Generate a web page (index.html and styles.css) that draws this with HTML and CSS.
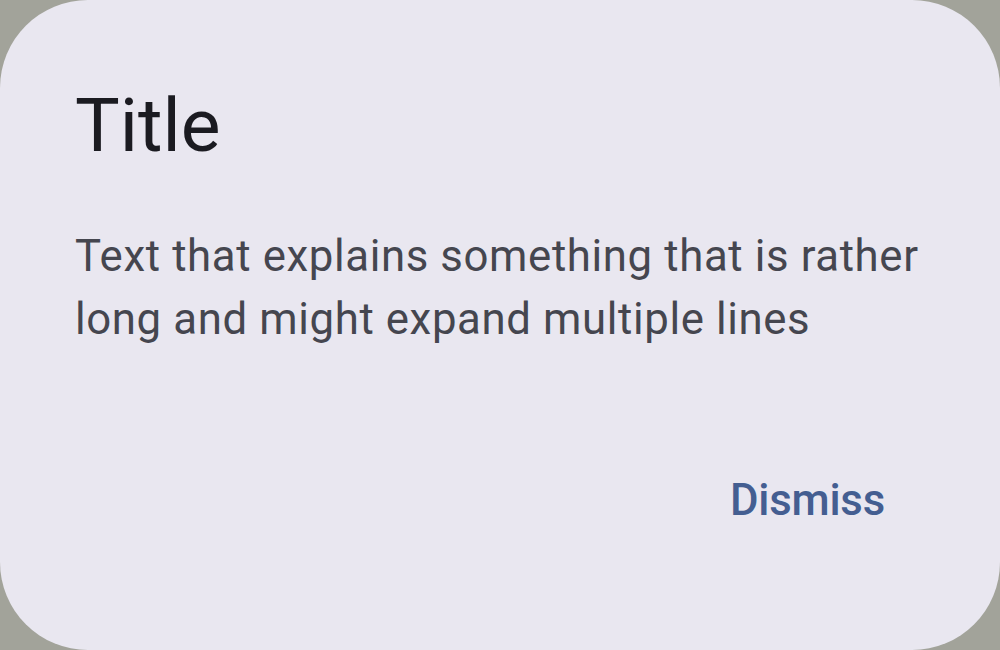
FILE: index.html
```html
<!DOCTYPE html>
<html>
<head>
<meta charset="utf-8">
<link rel="stylesheet" href="styles.css">
</head>
<body>
<div class="dialog">
  <h1 class="title">Title</h1>
  <p class="text">Text that explains something that is rather long and might expand multiple lines</p>
  <div class="actions">
    <button class="btn">Dismiss</button>
  </div>
</div>
</body>
</html>
```
FILE: styles.css
```css
html, body {
  margin: 0;
  padding: 0;
  width: 1000px;
  height: 650px;
  background: #a2a39a;
  overflow: hidden;
}
.dialog {
  box-sizing: border-box;
  width: 1000px;
  height: 650px;
  background: #e9e7f0;
  border-radius: 88px;
  padding: 75px 75px 0 75px;
  display: flex;
  flex-direction: column;
  font-family: Roboto, "Liberation Sans", sans-serif;
}
.title {
  margin: 0 0 50px 0;
  font-size: 75px;
  line-height: 100px;
  font-weight: 400;
  color: #1b1b21;
}
.text {
  margin: 0 -30px 0 0;
  font-size: 43.75px;
  line-height: 62.5px;
  letter-spacing: 0.62px;
  color: #45464f;
}
.actions {
  margin-top: 75px;
  display: flex;
  justify-content: flex-end;
}
.btn {
  height: 150px;
  padding: 0 40px;
  border: none;
  background: transparent;
  font-family: Roboto, "Liberation Sans", sans-serif;
  font-size: 43.75px;
  font-weight: 500;
  letter-spacing: -0.2px;
  color: #445e91;
}
```
